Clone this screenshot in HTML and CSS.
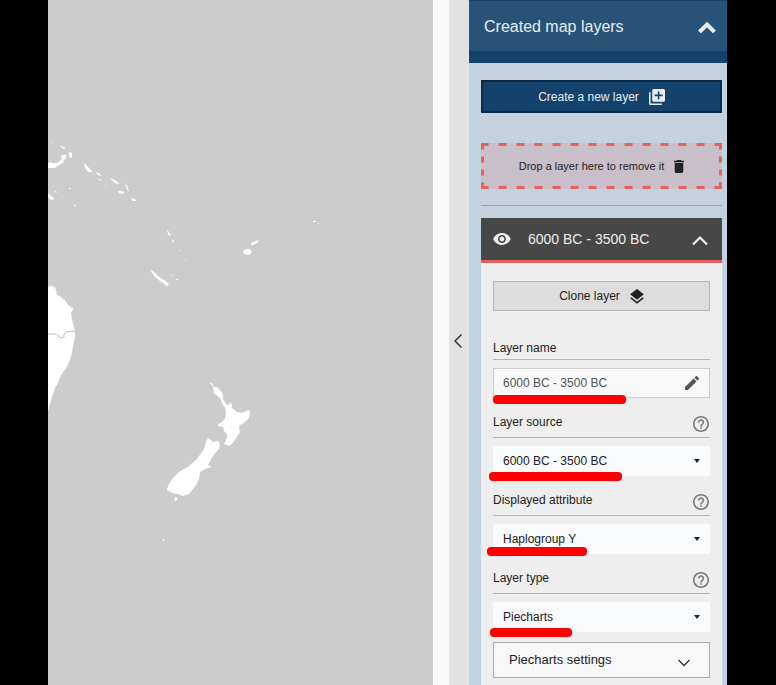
FILE: index.html
```html
<!DOCTYPE html>
<html lang="en">
<head>
<meta charset="utf-8">
<meta name="viewport" content="width=device-width, initial-scale=1">
<title>Map layers</title>
<link rel="stylesheet" href="styles.css">
</head>
<body>
<div class="app">
  <main class="map">
    <svg class="map-canvas" viewBox="48 0 385 685" preserveAspectRatio="xMinYMin slice" role="img" aria-label="Map of the South Pacific">
      <g fill="#fff">
        <path d="M48 287L49 286 50 287 52 285 53 287 55 287 56 290 57 295 60 296 62 298 65 300 68 305 71 307 72 310 73 306 73 310 71 313 72 320 74 327 75 332 75 337 73 347 71 357 67 367 61 375 58 383 55 388 52 397 49 408 48 411z"/>
        <path d="M48 163l3-1 1 1h6l1-2 3-2-1-3 2-1h3v3l-2 2-1 3-4 2-4 3H48zM69 152l3 1v4l-2 1-1-3zM60 145l5 3v1l-3-1zM51 142l2 1h-2zM48 193l3 3 3 2v1l-3 1-3-3zM54 190l3 2-1 1zM69 188h2v1h-2z"/>
        <path d="M84 163l4 4 4 4-1 1-3 0-3-4zM95 171l6 4v1l-3-1zM97 178l5 2-1 1zM111 178l5 3 3 2v1l-4-1-4-4zM118 191l4 0 3 2-3 1-3-1zM125 183l2 3 2 5-1 0-2-4zM131 198l4 1 1 2-3 0zM104 184l3 2h-1zM74 205h2v1h-2z"/>
        <path d="M167 230l2 2 2 3-2 1-1-2zM172 239l2 2v2l-2-2zM179 250h1v1h-1zM185 259h1v1h-1z"/>
        <path d="M150 269l4 3 5 5 7 4 3 4-2 1-7-5-6-5zM171 274l1 1-1 1zM176 279h2v1h-2z"/>
        <path d="M243 251l3-2 4 0 2 3-3 3-5-1-1-2zM251 243l5-2 3-1-2 3-4 2h-2zM313 221h3v1h-3zM318 223h1v1h-1z"/>
        <path d="M210 383L212 383 214 387 217 387 221 391 223 395 223 399 226 404 229 405 230 402 232 405 232 408 237 412 242 413 246 411 249 410 250 412 249 418 246 421 244 423 240 425 239 428 240 432 237 437 233 443 229 446 224 444 227 438 227 434 224 431 223 427 218 426 218 424 222 422 225 419 226 413 225 408 222 403 220 398 214 393 213 387z"/>
        <path d="M208 438L211 440 213 442 218 441 220 444 219 449 215 453 211 459 208 465 212 467 205 469 200 472 199 479 196 485 189 494 183 496 178 494 172 493 167 490 168 486 173 478 180 471 188 467 197 459 204 449 206 442zM175 497l3 1-2 3-2 0zM163 539h1v2h-1z"/>
      </g>
      <path d="M48 334h8l5 4 3-1v-3l2-2 9-1" fill="none" stroke="#aaa" stroke-width=".8"/>
    </svg>
  </main>
  <div class="gutter"></div>
  <button class="collapse" type="button" aria-label="Collapse panel">
    <svg width="8" height="16" viewBox="0 0 8 16"><path d="M7.500 1.500L1 8l6.500 6.500" fill="none" stroke="#333" stroke-width="1.500"/></svg>
  </button>

  <aside class="panel">
    <button class="panel-header" type="button" aria-expanded="true">
      <span>Created map layers</span>
      <svg width="18" height="12" viewBox="0 0 18 12"><path d="M1.500 11L9 3.500l7.500 7.500" fill="none" stroke="#e8edf2" stroke-width="4"/></svg>
    </button>
    <div class="panel-body">
      <button class="create" type="button">
        <span>Create a new layer</span>
        <svg width="16" height="16" viewBox="2 2 20 20" fill="#e8edf2"><path d="M4 6H2v14c0 1.100.9 2 2 2h14v-2H4V6zm16-4H8c-1.100 0-2 .9-2 2v12c0 1.100.9 2 2 2h12c1.100 0 2-.9 2-2V4c0-1.100-.9-2-2-2zm-1 9h-4v4h-2v-4H9V9h4V5h2v4h4v2z"/></svg>
      </button>
      <div class="drop-zone">
        <span>Drop a layer here to remove it</span>
        <svg width="10" height="13" viewBox="5 3 14 18" preserveAspectRatio="none" fill="#222"><path d="M6 19c0 1.100.9 2 2 2h8c1.100 0 2-.9 2-2V7H6v12zM19 4h-3.500l-1-1h-5l-1 1H5v2h14V4z"/></svg>
      </div>
      <hr class="divider">

      <section class="layer">
        <header class="layer-header">
          <button class="icon-button" type="button" aria-label="Toggle visibility">
            <svg width="18" height="12" viewBox="1 4.500 22 15" fill="#eee"><path d="M12 4.500C7 4.500 2.730 7.610 1 12c1.730 4.390 6 7.500 11 7.500s9.270-3.110 11-7.500c-1.730-4.390-6-7.500-11-7.500zM12 17c-2.760 0-5-2.240-5-5s2.240-5 5-5 5 2.240 5 5-2.240 5-5 5zm0-8c-1.660 0-3 1.340-3 3s1.340 3 3 3 3-1.340 3-3-1.340-3-3-3z"/></svg>
          </button>
          <h2 class="layer-title">6000 BC - 3500 BC</h2>
          <button class="icon-button" type="button" aria-label="Collapse layer">
            <svg width="16" height="14" viewBox="0 0 16 14"><path d="M1 12.500l7-7 7 7" fill="none" stroke="#eee" stroke-width="2.200"/></svg>
          </button>
        </header>
        <div class="layer-body">
          <button class="clone" type="button">
            <span>Clone layer</span>
            <svg width="14" height="15" viewBox="3 2 18 19.540" fill="#222"><path d="M11.990 18.540l-7.370-5.730L3 14.070l9 7 9-7-1.630-1.270-7.380 5.740zM12 16l7.360-5.730L21 9l-9-7-9 7 1.630 1.270L12 16z"/></svg>
          </button>

          <div class="field">
            <div class="field-head"><label for="layer-name">Layer name</label></div>
            <div class="control">
              <input id="layer-name" class="text-box" type="text" value="6000 BC - 3500 BC">
              <svg class="pencil" width="14" height="14" viewBox="3 3 18 18" fill="#555"><path d="M3 17.250V21h3.750L17.810 9.940l-3.750-3.750L3 17.250zM20.710 7.040c.39-.39.39-1.020 0-1.410l-2.340-2.340c-.39-.39-1.020-.39-1.410 0l-1.830 1.830 3.750 3.750 1.830-1.830z"/></svg>
              <span class="mark mark-name"></span>
            </div>
          </div>

          <div class="field">
            <div class="field-head">
              <label for="layer-source">Layer source</label>
              <button class="help" type="button" aria-label="Help"><svg width="16" height="16" viewBox="2 2 20 20" fill="#777"><path d="M11 18h2v-2h-2v2zm1-16C6.480 2 2 6.480 2 12s4.480 10 10 10 10-4.480 10-10S17.520 2 12 2zm0 18c-4.410 0-8-3.590-8-8s3.590-8 8-8 8 3.590 8 8-3.590 8-8 8zm0-14c-2.210 0-4 1.790-4 4h2c0-1.100.9-2 2-2s2 .9 2 2c0 2-3 1.750-3 5h2c0-2.250 3-2.500 3-5 0-2.210-1.790-4-4-4z"/></svg></button>
            </div>
            <div class="control">
              <select id="layer-source" class="select"><option>6000 BC - 3500 BC</option></select>
              <span class="mark mark-source"></span>
            </div>
          </div>

          <div class="field">
            <div class="field-head">
              <label for="attribute">Displayed attribute</label>
              <button class="help" type="button" aria-label="Help"><svg width="16" height="16" viewBox="2 2 20 20" fill="#777"><path d="M11 18h2v-2h-2v2zm1-16C6.480 2 2 6.480 2 12s4.480 10 10 10 10-4.480 10-10S17.520 2 12 2zm0 18c-4.410 0-8-3.590-8-8s3.590-8 8-8 8 3.590 8 8-3.590 8-8 8zm0-14c-2.210 0-4 1.790-4 4h2c0-1.100.9-2 2-2s2 .9 2 2c0 2-3 1.750-3 5h2c0-2.250 3-2.500 3-5 0-2.210-1.790-4-4-4z"/></svg></button>
            </div>
            <div class="control">
              <select id="attribute" class="select"><option>Haplogroup Y</option></select>
              <span class="mark mark-attribute"></span>
            </div>
          </div>

          <div class="field">
            <div class="field-head">
              <label for="layer-type">Layer type</label>
              <button class="help" type="button" aria-label="Help"><svg width="16" height="16" viewBox="2 2 20 20" fill="#777"><path d="M11 18h2v-2h-2v2zm1-16C6.480 2 2 6.480 2 12s4.480 10 10 10 10-4.480 10-10S17.520 2 12 2zm0 18c-4.410 0-8-3.590-8-8s3.590-8 8-8 8 3.590 8 8-3.590 8-8 8zm0-14c-2.210 0-4 1.790-4 4h2c0-1.100.9-2 2-2s2 .9 2 2c0 2-3 1.750-3 5h2c0-2.250 3-2.500 3-5 0-2.210-1.790-4-4-4z"/></svg></button>
            </div>
            <div class="control">
              <select id="layer-type" class="select"><option>Piecharts</option></select>
              <span class="mark mark-type"></span>
            </div>
          </div>

          <button class="settings" type="button" aria-expanded="false">
            <span>Piecharts settings</span>
            <svg width="12" height="14" viewBox="0 0 12 14"><path d="M.5 7L6 12.500 11.500 7" fill="none" stroke="#333" stroke-width="1.300"/></svg>
          </button>
        </div>
      </section>
    </div>
  </aside>
</div>
</body>
</html>
```
FILE: styles.css
```css
* {
  box-sizing: border-box;
}

body {
  margin: 0;
  background: #000;
  color: #222;
  font-family: "Liberation Sans", Arial, sans-serif;
  font-size: 13px;
  line-height: 16px;
}

button,
input,
select {
  margin: 0;
  padding: 0;
  border: 0;
  border-radius: 0;
  background: none;
  color: inherit;
  font: inherit;
}

svg {
  display: block;
  flex: none;
}

.app {
  display: grid;
  grid-template-columns: minmax(0, 1fr) 16px 20px 258px;
  height: 100vh;
  margin: 0 49px 0 48px;
  overflow: hidden;
}

.map {
  min-height: 0;
  overflow: hidden;
  background: #ccc;
}

.map-canvas {
  width: 100%;
  height: 100%;
}

.gutter {
  background: #f8f8f8;
}

.collapse {
  display: flex;
  align-items: center;
  justify-content: center;
  padding: 0 2px 4px 0;
  background: #e2e2e2;
}

.panel {
  min-height: 0;
  overflow: hidden;
  background: #c4d1de;
}

.panel-header {
  display: flex;
  align-items: center;
  justify-content: space-between;
  width: 100%;
  height: 63px;
  padding: 1px 11px 0 15px;
  border-top: 1px solid #13426d;
  border-bottom: 12px solid #13426d;
  background: #275379;
  color: #e8edf2;
  font-size: 16px;
}

.panel-body {
  padding: 17px 5px 0 12px;
}

.create,
.drop-zone,
.clone {
  display: flex;
  align-items: center;
  justify-content: center;
  gap: 10px;
  width: 100%;
}

.create {
  height: 33px;
  border: 2px solid #0b2b49;
  background: #13426d;
  color: #e8edf2;
  font-size: 12px;
}

.drop-zone {
  height: 46px;
  margin-top: 30px;
  background:
    linear-gradient(90deg, #e9605e 4px, transparent 4px 14px, #e9605e 14px) center top / 18px 3px repeat-x,
    linear-gradient(90deg, #e9605e 4px, transparent 4px 14px, #e9605e 14px) center bottom / 18px 3px repeat-x,
    linear-gradient(#e9605e 3px, transparent 3px 10px, #e9605e 10px) left center / 3px 13px repeat-y,
    linear-gradient(#e9605e 3px, transparent 3px 10px, #e9605e 10px) right center / 3px 13px repeat-y,
    #c8bfc9;
  font-size: 11px;
}

.divider {
  height: 1px;
  margin: 16px 0 12px;
  border: 0;
  background: #98a2ae;
}

.layer-header {
  display: flex;
  align-items: center;
  height: 45px;
  padding: 0 14px 0 12px;
  border-bottom: 3px solid #e55f5f;
  background: #474747;
  color: #eee;
}

.layer-title {
  flex: 1;
  margin: 0 0 0 17px;
  font-size: 14px;
  font-weight: 400;
}

.layer-body {
  padding: 18px 12px 12px;
  background: #eee;
}

.clone {
  height: 30px;
  margin-bottom: 17px;
  border: 1px solid #b4b4b4;
  background: #ddd;
  font-size: 12px;
}

.field {
  margin-bottom: 10px;
  font-size: 12px;
}

.field-head {
  display: flex;
  align-items: flex-start;
  justify-content: space-between;
  height: 32px;
  padding: 12px 1px 0 0;
  border-bottom: 1px solid #b4b4b4;
}

.field + .field .field-head {
  height: 30px;
  padding-top: 6px;
}

.help {
  margin-top: 2px;
}

.control {
  position: relative;
  height: 30px;
  margin-top: 8px;
}

.text-box,
.select {
  width: 100%;
  height: 100%;
  padding: 0 10px;
}

.text-box {
  padding: 0 9px;
  border: 1px solid #ccc;
  background: #f8f8f8;
  color: #555;
}

.select {
  appearance: none;
  background: #f8fafc url("data:image/svg+xml,%3Csvg xmlns='http://www.w3.org/2000/svg' width='6' height='4'%3E%3Cpath d='M0 0h6L3 4z' fill='%23222'/%3E%3C/svg%3E") no-repeat right 10px center;
}

.pencil {
  position: absolute;
  top: 8px;
  right: 11px;
}

.mark {
  position: absolute;
  height: 9px;
  border-radius: 4px;
  background: #f00;
  pointer-events: none;
}

.mark-name {
  top: 27px;
  left: 0;
  width: 133px;
}

.mark-source {
  top: 26px;
  left: -4px;
  width: 133px;
}

.mark-attribute {
  top: 23px;
  left: -6px;
  width: 100px;
}

.mark-type {
  top: 26px;
  left: -3px;
  width: 82px;
}

.settings {
  display: flex;
  align-items: center;
  justify-content: space-between;
  width: 100%;
  height: 36px;
  padding: 0 19px 0 15px;
  border: 1px solid #aaa;
  background: #f8f8f8;
}
```
